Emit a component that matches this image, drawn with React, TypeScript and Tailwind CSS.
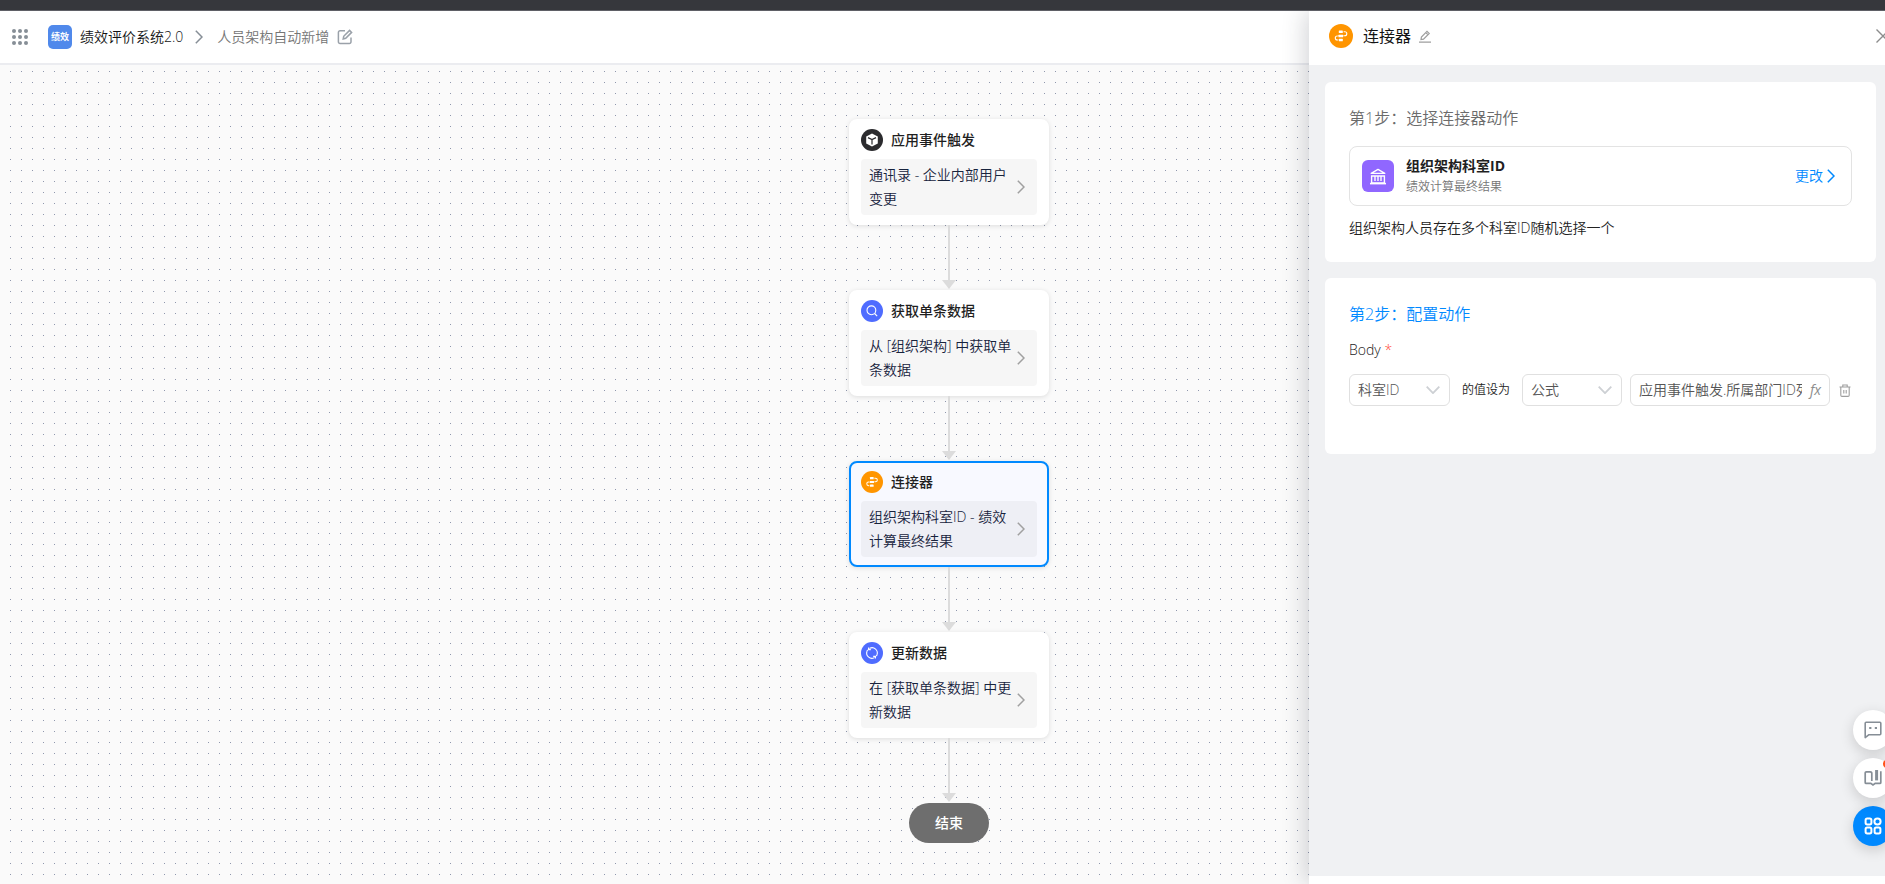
import { Fragment } from "react";

const Chevron = ({ className = "" }) => (
    <svg viewBox="0 0 8 14" className={className} fill="none" stroke="currentColor" strokeWidth="1.5">
        <path d="M0.8 0.8 7 7 0.8 13.2" />
    </svg>
)

const ConnectorIcon = ({ className = "" }) => (
    <svg viewBox="0 0 24 24" className={className}>
        <circle cx="12" cy="12" r="12" fill="#ff9500" />
        <g fill="#fff">
            <rect x="9.8" y="6.6" width="4" height="2.5" rx=".5" />
            <rect x="9.4" y="10.8" width="4.8" height="2.4" rx=".5" />
            <rect x="9.8" y="14.8" width="4" height="2.5" rx=".5" />
        </g>
        <g fill="none" stroke="#fff" strokeWidth="1.1">
            <path d="M14.6 7.8h1.2a2 2 0 0 1 0 4h-1.2" />
            <path d="M8.8 12H8.3a2 2 0 0 0 0 4h.8" />
        </g>
    </svg>
)

const CubeIcon = ({ className = "" }) => (
    <svg viewBox="0 0 22 22" className={className}>
        <circle cx="11" cy="11" r="11" fill="#2b2b2e" />
        <path d="M11 4.4 16.8 7.4v7.2L11 17.6l-5.8-3V7.4z" fill="#fff" />
        <path d="M7 8.6 11 10.6l4-2M11 10.6v4.8" fill="none" stroke="#2b2b2e" strokeWidth="1.2" />
    </svg>
)

const SearchIcon = ({ className = "" }) => (
    <svg viewBox="0 0 22 22" className={className} fill="none" stroke="#fff" strokeWidth="1.1">
        <circle cx="11" cy="11" r="11" fill="#4f6cff" stroke="none" />
        <circle cx="10.4" cy="10.3" r="4.4" />
        <path d="m13.6 13.5 2.6 2.6" />
    </svg>
)

const SyncIcon = ({ className = "" }) => (
    <svg viewBox="0 0 22 22" className={className} fill="none" stroke="#fff" strokeWidth="1.1">
        <circle cx="11" cy="11" r="11" fill="#4f6cff" stroke="none" />
        <path d="M8.8 6.2a5.3 5.3 0 0 1 7.2 6.6" />
        <path d="M13.2 15.8a5.3 5.3 0 0 1-7.2-6.6" />
        <path d="M6 9.2a5.3 5.3 0 0 1 2.8-3M16 12.8a5.3 5.3 0 0 1-2.8 3" strokeDasharray="1.4 .9" />
        <path d="M7.6 5.4v2.2h2.2M14.4 16.6v-2.2h-2.2" />
    </svg>
)

const nodes = [
    { title: "应用事件触发", text: "通讯录 - 企业内部用户变更", Icon: CubeIcon },
    { title: "获取单条数据", text: "从 [组织架构] 中获取单条数据", Icon: SearchIcon },
    { title: "连接器", text: "组织架构科室ID - 绩效计算最终结果", Icon: ConnectorIcon, active: true },
    { title: "更新数据", text: "在 [获取单条数据] 中更新数据", Icon: SyncIcon },
]

function FlowNode({ title, text, Icon, active = false }) {
    return (
        <div className={`w-[200px] rounded-lg border-2 px-[10px] py-2 shadow-[0_1px_5px_rgba(0,0,0,0.12)] ${active ? "bg-[#f8f9ff] border-[#0089ff]" : "bg-white border-white"}`}>
            <div className="flex items-center gap-2 h-[22px]">
                <Icon className="size-[22px]" />
                <h3 className="text-sm font-medium text-[#1f1f1f]">{title}</h3>
            </div>
            <button className={`flex items-center justify-between text-left w-full mt-2 rounded py-1 pl-2 pr-3 ${active ? "bg-[#eeeff5]" : "bg-[#f6f6f6]"}`}>
                <span className="w-[144px] text-sm leading-6 text-[#17233d]">{text}</span>
                <Chevron className="w-2 h-[14px] shrink-0 text-[#a0a0a0]" />
            </button>
        </div>
    )
}

function Arrow() {
    return (
        <div className="flex flex-col items-center h-[65px] pb-px">
            <div className="w-[2px] grow bg-[#dcdcdc]"></div>
            <svg viewBox="0 0 14 9" className="w-[14px] h-[9px]"><path d="M0 0h14L7 9z" fill="#dcdcdc" /></svg>
        </div>
    )
}

function Navbar() {
    return (
        <header className="flex items-center h-[54px] shrink-0 bg-white border-b-2 border-[#ebecf0] pl-3">
            <button aria-label="应用">
                <svg viewBox="0 0 16 16" className="size-4" fill="#868e96">
                    {[2, 8, 14].map((y) => [2, 8, 14].map((x) => <circle key={`${x}-${y}`} cx={x} cy={y} r="2" />))}
                </svg>
            </button>
            <span className="flex items-center justify-center size-6 ml-5 rounded-[5px] bg-[#5089eb] text-[9px] font-bold text-white">绩效</span>
            <a href="#" className="ml-2 text-sm text-[#141414]">绩效评价系统2.0</a>
            <Chevron className="w-2 h-[14px] ml-3 text-[#868e96]" />
            <span className="ml-[14px] text-sm text-[#757575]">人员架构自动新增</span>
            <button aria-label="编辑" className="ml-2">
                <svg viewBox="0 0 16 16" className="size-4 text-[#9aa1a9]" fill="none" stroke="currentColor" strokeWidth="1.5">
                    <path d="M8 1.8H3A1.6 1.6 0 0 0 1.4 3.4v9.4A1.6 1.6 0 0 0 3 14.4h9.4a1.6 1.6 0 0 0 1.6-1.6V8.5" />
                    <path d="m6.2 10 .5-2.7 5.9-5.9 2 2-5.9 5.9z" />
                </svg>
            </button>
        </header>
    )
}

function Select({ label, value, className = "" }) {
    return (
        <div className={`relative ${className}`}>
            <select aria-label={label} defaultValue={value} className="appearance-none w-full h-8 rounded-md border border-[#e0e0e0] bg-white pl-2 text-sm text-[#555]">
                <option>{value}</option>
            </select>
            <svg viewBox="0 0 14 8" className="absolute right-[10px] top-3 w-[14px] h-2 text-[#cdd0d4] pointer-events-none" fill="none" stroke="currentColor" strokeWidth="1.8">
                <path d="m.7.7 6.3 6.4L13.3.7" />
            </svg>
        </div>
    )
}

function Drawer() {
    return (
        <aside className="absolute right-0 inset-y-0 w-[589px] flex flex-col bg-white shadow-[-4px_0_22px_rgba(40,45,60,0.2)]">
            <div className="flex items-center h-[54px] shrink-0 pl-5 pr-2 pb-1">
                <ConnectorIcon className="size-6" />
                <h2 className="ml-[10px] text-base leading-6 font-normal text-[#141414]">连接器</h2>
                <button aria-label="重命名" className="ml-2">
                    <svg viewBox="0 0 12 13" className="w-3 h-[13px] text-[#9e9e9e]" fill="none" stroke="currentColor" strokeWidth="1.2">
                        <path d="M2 9.6l.4-2.6L8 1.3l2.2 2.2-5.7 5.7zM6.8 2.6l2.1 2.1M0 12.2h12" />
                    </svg>
                </button>
                <button aria-label="关闭" className="ml-auto">
                    <svg viewBox="0 0 14 14" className="size-[14px] text-[#8c8c8c]" fill="none" stroke="currentColor" strokeWidth="1.4">
                        <path d="m.5.5 13 13M13.5.5l-13 13" />
                    </svg>
                </button>
            </div>
            <div className="flex flex-col gap-4 grow bg-[#f0f1f3] pl-4 pr-[22px] pt-[17px] mb-2">
                <section className="bg-white rounded-md px-6 pt-6 pb-[22px]">
                    <h3 className="text-base leading-6 text-[#6b6b6b]">第1步：选择连接器动作</h3>
                    <div className="flex items-center h-[60px] mt-4 rounded-lg border border-[#e3e3e3] pl-3 pr-4">
                        <span className="flex items-center justify-center size-8 rounded-md bg-[#9067ff]">
                            <svg viewBox="0 0 16 17" className="w-4 h-[17px]" fill="none" stroke="#fff">
                                <path d="M1.2 5.4 8 1.4l6.8 4z" strokeWidth="1.3" strokeLinejoin="round" />
                                <path d="M1.6 8h12.8v7H1.6zM5 8v5M8 8v5M11 8v5" strokeWidth="1.4" />
                                <path d="M0 15.6h16" strokeWidth="1.6" />
                            </svg>
                        </span>
                        <div className="ml-3">
                            <h4 className="text-sm leading-[22px] font-bold text-[#1f1f1f]">组织架构科室ID</h4>
                            <p className="text-xs leading-5 text-[#757575]">绩效计算最终结果</p>
                        </div>
                        <button className="flex items-center gap-1 ml-auto text-sm text-[#0089ff]">
                            更改
                            <Chevron className="w-2 h-[14px]" />
                        </button>
                    </div>
                    <p className="mt-[10px] text-sm leading-6 text-[#222]">组织架构人员存在多个科室ID随机选择一个</p>
                </section>
                <section className="bg-white rounded-md px-6 pt-6 pb-12">
                    <h3 className="text-base leading-6 text-[#0089ff]">第2步：配置动作</h3>
                    <p className="mt-3 text-sm leading-6 text-[#222]">Body <span className="text-[#ff4d3a]">*</span></p>
                    <div className="flex items-center mt-3">
                        <Select label="字段" value="科室ID" className="w-[101px]" />
                        <span className="mx-3 text-xs text-[#222]">的值设为</span>
                        <Select label="值类型" value="公式" className="w-[100px]" />
                        <div className="flex items-center w-[200px] h-8 ml-2 rounded-md border border-[#e0e0e0] px-2">
                            <input aria-label="公式" defaultValue="应用事件触发.所属部门ID列表" className="min-w-0 grow text-sm text-[#555] outline-none" />
                            <button className="ml-2 text-sm italic font-medium text-[#8c8c8c]">fx</button>
                        </div>
                        <button aria-label="删除" className="ml-[9px]">
                            <svg viewBox="0 0 12 13" className="w-3 h-[13px] text-[#9e9e9e]" fill="none" stroke="currentColor" strokeWidth="1.1">
                                <path d="M.5 3h11M3.8 3V1h4.4v2M1.8 3v8.2c0 .8.5 1.2 1.2 1.2h6c.7 0 1.2-.4 1.2-1.2V3M4.8 6v3.4M7.2 6v3.4" />
                            </svg>
                        </button>
                    </div>
                </section>
            </div>
        </aside>
    )
}

function FloatingButtons() {
    return (
        <div className="absolute right-[5px] bottom-[38px] flex flex-col gap-2">
            <button aria-label="消息" className="flex items-center justify-center size-10 rounded-full bg-white shadow-[0_4px_14px_rgba(0,0,0,0.16)]">
                <svg viewBox="0 0 18 18" className="size-[18px] text-[#868e96]" fill="none" stroke="currentColor" strokeWidth="1.6">
                    <path d="M1.2 16.6V2.2c0-.5.4-.9.9-.9h13.8c.5 0 .9.4.9.9v10.6c0 .5-.4.9-.9.9H5z" strokeLinejoin="round" />
                    <path d="M5.2 7h2.2M10.8 7H13" strokeWidth="2" />
                </svg>
            </button>
            <button aria-label="帮助" className="relative flex items-center justify-center size-10 rounded-full bg-white shadow-[0_4px_14px_rgba(0,0,0,0.16)]">
                <svg viewBox="0 0 18 18" className="size-[18px] text-[#868e96]" fill="none" stroke="currentColor" strokeWidth="1.7">
                    <path d="M7.8 12V4.4c0-1-.6-1.6-1.6-1.6H2.4c-.8 0-1.2.5-1.2 1.2v9.4c0 .6.4 1 1 1h4.6L9 16l2.2-1.6h4.6c.6 0 1-.4 1-1V2.2" />
                    <path d="M12.6 1v10.4" strokeWidth="3" />
                </svg>
                <span className="absolute right-[2px] top-[2px] size-2 rounded-full bg-[#ff5219]"></span>
            </button>
            <button aria-label="更多" className="flex items-center justify-center size-10 rounded-full bg-[#0089ff] shadow-[0_4px_14px_rgba(0,0,0,0.16)]">
                <svg viewBox="0 0 18 18" className="size-[18px]" fill="none" stroke="#fff" strokeWidth="2">
                    <rect x="1.6" y="1.6" width="5.8" height="5.8" rx="1.6" />
                    <circle cx="13.5" cy="4.5" r="3.1" />
                    <rect x="1.6" y="10.6" width="5.8" height="5.8" rx="1.6" />
                    <rect x="10.6" y="10.6" width="5.8" height="5.8" rx="1.6" />
                </svg>
            </button>
        </div>
    )
}

export default function App() {
    return (
        <div className="h-screen overflow-hidden font-[350] font-['Open_Sans','Noto_Sans_CJK_SC',sans-serif]">
            <div className="flex flex-col h-full w-[calc(100%+13px)]">
                <div className="h-[11px] shrink-0 bg-[#36373c] border-b border-[#5f6066]"></div>
                <div className="relative flex flex-col grow overflow-hidden">
                    <Navbar />
                    <main className="flex flex-col items-center grow pt-[54px] bg-[#fafafa] bg-[radial-gradient(circle_at_center,#8f97ad_0.6px,transparent_0.8px)] bg-[size:11px_11px] bg-[position:5px_1px]">
                        {nodes.map((node) => (
                            <Fragment key={node.title}>
                                <FlowNode {...node} />
                                <Arrow />
                            </Fragment>
                        ))}
                        <div className="flex items-center justify-center w-20 h-10 rounded-full bg-[#6e6e6e] text-sm font-medium text-white">结束</div>
                    </main>
                    <Drawer />
                    <FloatingButtons />
                </div>
            </div>
        </div>
    )
}
